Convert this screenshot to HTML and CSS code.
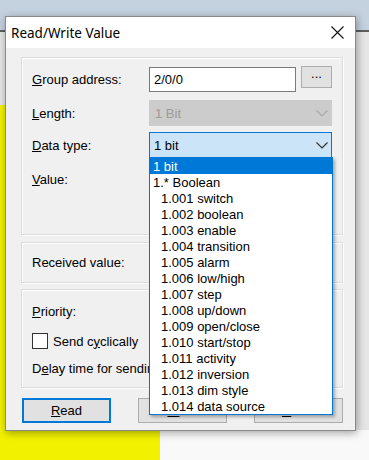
FILE: index.html
```html
<!DOCTYPE html>
<html>
<head>
<meta charset="utf-8">
<link rel="stylesheet" href="styles.css">
</head>
<body>
<div class="desktop">
  <div class="bg-top"></div>
  <div class="bg-line"></div>
  <div class="bg-main">
    <div class="bg-left"><div class="bg-gray"></div><div class="bg-yellow"></div></div>
    <div class="bg-right"><div class="bg-shade"></div><div class="bg-white"></div></div>
  </div>

  <div class="window">
    <div class="titlebar">
      <span class="title">Read/Write Value</span>
      <svg class="close" width="13" height="13" viewBox="0 0 13 13"><path d="M0.5 0.5 L12.5 12.5 M12.5 0.5 L0.5 12.5" stroke="#111" stroke-width="1.1" fill="none"/></svg>
    </div>
    <div class="client">
      <div class="group g1">
        <div class="row row-top">
          <span class="label"><u>G</u>roup address:</span>
          <div class="field">2/0/0</div>
          <div class="btn small">...</div>
        </div>
        <div class="row row2">
          <span class="label"><u>L</u>ength:</span>
          <div class="combo disabled">
            <span>1 Bit</span>
            <svg class="chev" width="12" height="7" viewBox="0 0 12 7"><polyline points="0.5,0.5 6,6 11.5,0.5" fill="none" stroke="#a9a9a9" stroke-width="1.2"/></svg>
          </div>
        </div>
        <div class="row row3">
          <span class="label"><u>D</u>ata type:</span>
          <div class="combo active">
            <span>1 bit</span>
            <svg class="chev" width="12" height="7" viewBox="0 0 12 7"><polyline points="0.5,0.5 6,6 11.5,0.5" fill="none" stroke="#333" stroke-width="1.2"/></svg>
            <div class="list">
              <div class="item sel">1 bit</div>
              <div class="item">1.* Boolean</div>
              <div class="item sub">1.001 switch</div>
              <div class="item sub">1.002 boolean</div>
              <div class="item sub">1.003 enable</div>
              <div class="item sub">1.004 transition</div>
              <div class="item sub">1.005 alarm</div>
              <div class="item sub">1.006 low/high</div>
              <div class="item sub">1.007 step</div>
              <div class="item sub">1.008 up/down</div>
              <div class="item sub">1.009 open/close</div>
              <div class="item sub">1.010 start/stop</div>
              <div class="item sub">1.011 activity</div>
              <div class="item sub">1.012 inversion</div>
              <div class="item sub">1.013 dim style</div>
              <div class="item sub">1.014 data source</div>
            </div>
          </div>
        </div>
        <div class="line-row value-row"><span class="label"><u>V</u>alue:</span></div>
      </div>

      <div class="group g2">
        <span class="label">Received value:</span>
      </div>

      <div class="group g3">
        <div class="line-row"><span class="label"><u>P</u>riority:</span></div>
        <div class="check-row"><span class="checkbox"></span><span>Send c<u>y</u>clically</span></div>
        <div class="line-row delay"><span>D<u>e</u>lay time for sending (s):</span></div>
      </div>

      <div class="buttons">
        <div class="btn default"><span><u>R</u>ead</span></div>
        <div class="btn"><span><u>W</u>rite</span></div>
        <div class="btn"><span><u>C</u>lose</span></div>
      </div>
    </div>
  </div>
</div>
</body>
</html>
```
FILE: styles.css
```css
* { box-sizing: border-box; }
html, body { margin: 0; padding: 0; }
body {
  width: 369px;
  height: 460px;
  overflow: hidden;
  font-family: "Liberation Sans", Arial, sans-serif;
  font-size: 13px;
  color: #000;
}
u { text-decoration: underline; text-underline-offset: 1px; }

.desktop {
  position: relative;
  width: 369px;
  height: 460px;
  display: flex;
  flex-direction: column;
}
.bg-top { height: 30px; background: #c4d1de; }
.bg-line { height: 2px; background: #5e5e5e; }
.bg-main { flex: 1; display: flex; }
.bg-left { width: 160px; display: flex; flex-direction: column; }
.bg-gray { height: 73px; background: #e6e6e6; }
.bg-yellow { flex: 1; background: #f2f200; }
.bg-right { flex: 1; display: flex; flex-direction: column; }
.bg-shade { height: 398px; background: linear-gradient(to right, #d2d2d2, #e6e6e6); }
.bg-white { flex: 1; background: #f9f9f9; }

.window {
  position: absolute;
  left: 5px;
  top: 16px;
  width: 351px;
  height: 415px;
  border: 1px solid #8a8a8a;
  background: #f0f0f0;
  box-shadow: 1px 2px 8px rgba(0, 0, 0, 0.35);
  display: flex;
  flex-direction: column;
}
.titlebar {
  height: 31px;
  flex: none;
  background: #fff;
  display: flex;
  align-items: center;
  padding-left: 5px;
}
.title {
  font-family: "Noto Sans", "Liberation Sans", sans-serif;
  font-size: 13.5px;
  color: #000;
}
.close { margin-left: auto; margin-right: 11px; }

.client {
  flex: 1;
  padding: 9px 12px 0 15px;
  display: flex;
  flex-direction: column;
}
.group {
  border: 1px solid #dcdcdc;
  box-shadow: inset 1px 1px 0 #fff, 1px 1px 0 #fff;
  flex: none;
}
.label { width: 117px; flex: none; white-space: nowrap; }

.g1 {
  height: 178px;
  padding: 8px 10px 0 10px;
  display: flex;
  flex-direction: column;
}
.row { display: flex; align-items: center; height: 26px; }
.row-top { align-items: flex-start; }
.row-top .label { align-self: center; }
.row2 { margin-top: 8px; }
.row3 { margin-top: 6px; }
.line-row { height: 15px; line-height: 15px; white-space: nowrap; }
.value-row { margin-top: 14px; }

.field {
  width: 147px;
  height: 25px;
  margin-top: 1px;
  border: 1px solid #7a7a7a;
  background: #fff;
  padding-left: 4px;
  line-height: 23px;
}
.btn {
  width: 89px;
  height: 25px;
  border: 1px solid #adadad;
  background: #e1e1e1;
  display: flex;
  align-items: center;
  justify-content: center;
}
.btn.small {
  width: 31px;
  height: 22px;
  margin-left: 5px;
  line-height: 20px;
  align-items: flex-end;
  padding-bottom: 3px;
}
.btn.default { border: 2px solid #0078d7; }

.combo {
  flex: 1;
  height: 26px;
  display: flex;
  align-items: center;
  padding-left: 4px;
  border: 1px solid #cccccc;
}
.combo.disabled { background: #cccccc; color: #9a9a9a; padding-left: 5px; }
.combo.active { background: #cce4f7; border-color: #0078d7; position: relative; }
.chev { margin-left: auto; margin-right: 3px; }

.list {
  position: absolute;
  left: -1px;
  right: -2px;
  top: 24px;
  height: 258px;
  border: 1px solid #0078d7;
  background: #fff;
  color: #000;
  box-shadow: 2px 2px 3px rgba(0, 0, 0, 0.3);
  z-index: 5;
}
.item {
  height: 16px;
  line-height: 17px;
  padding-left: 3px;
  white-space: nowrap;
}
.item.sub { padding-left: 11px; }
.item.sel { background: #0078d7; color: #fff; }

.g2 {
  margin-top: 7px;
  height: 41px;
  padding-left: 10px;
  display: flex;
  align-items: center;
}
.g3 {
  margin-top: 6px;
  height: 99px;
  padding: 14px 10px 0 10px;
  display: flex;
  flex-direction: column;
  overflow: hidden;
}
.check-row {
  margin-top: 14px;
  height: 16px;
  display: flex;
  align-items: center;
  white-space: nowrap;
}
.checkbox {
  width: 16px;
  height: 16px;
  border: 1px solid #333;
  background: #fff;
  margin-right: 5px;
  flex: none;
}
.delay { margin-top: 12px; }

.buttons {
  margin-top: 10px;
  padding-left: 1px;
  display: flex;
  justify-content: space-between;
}
```
